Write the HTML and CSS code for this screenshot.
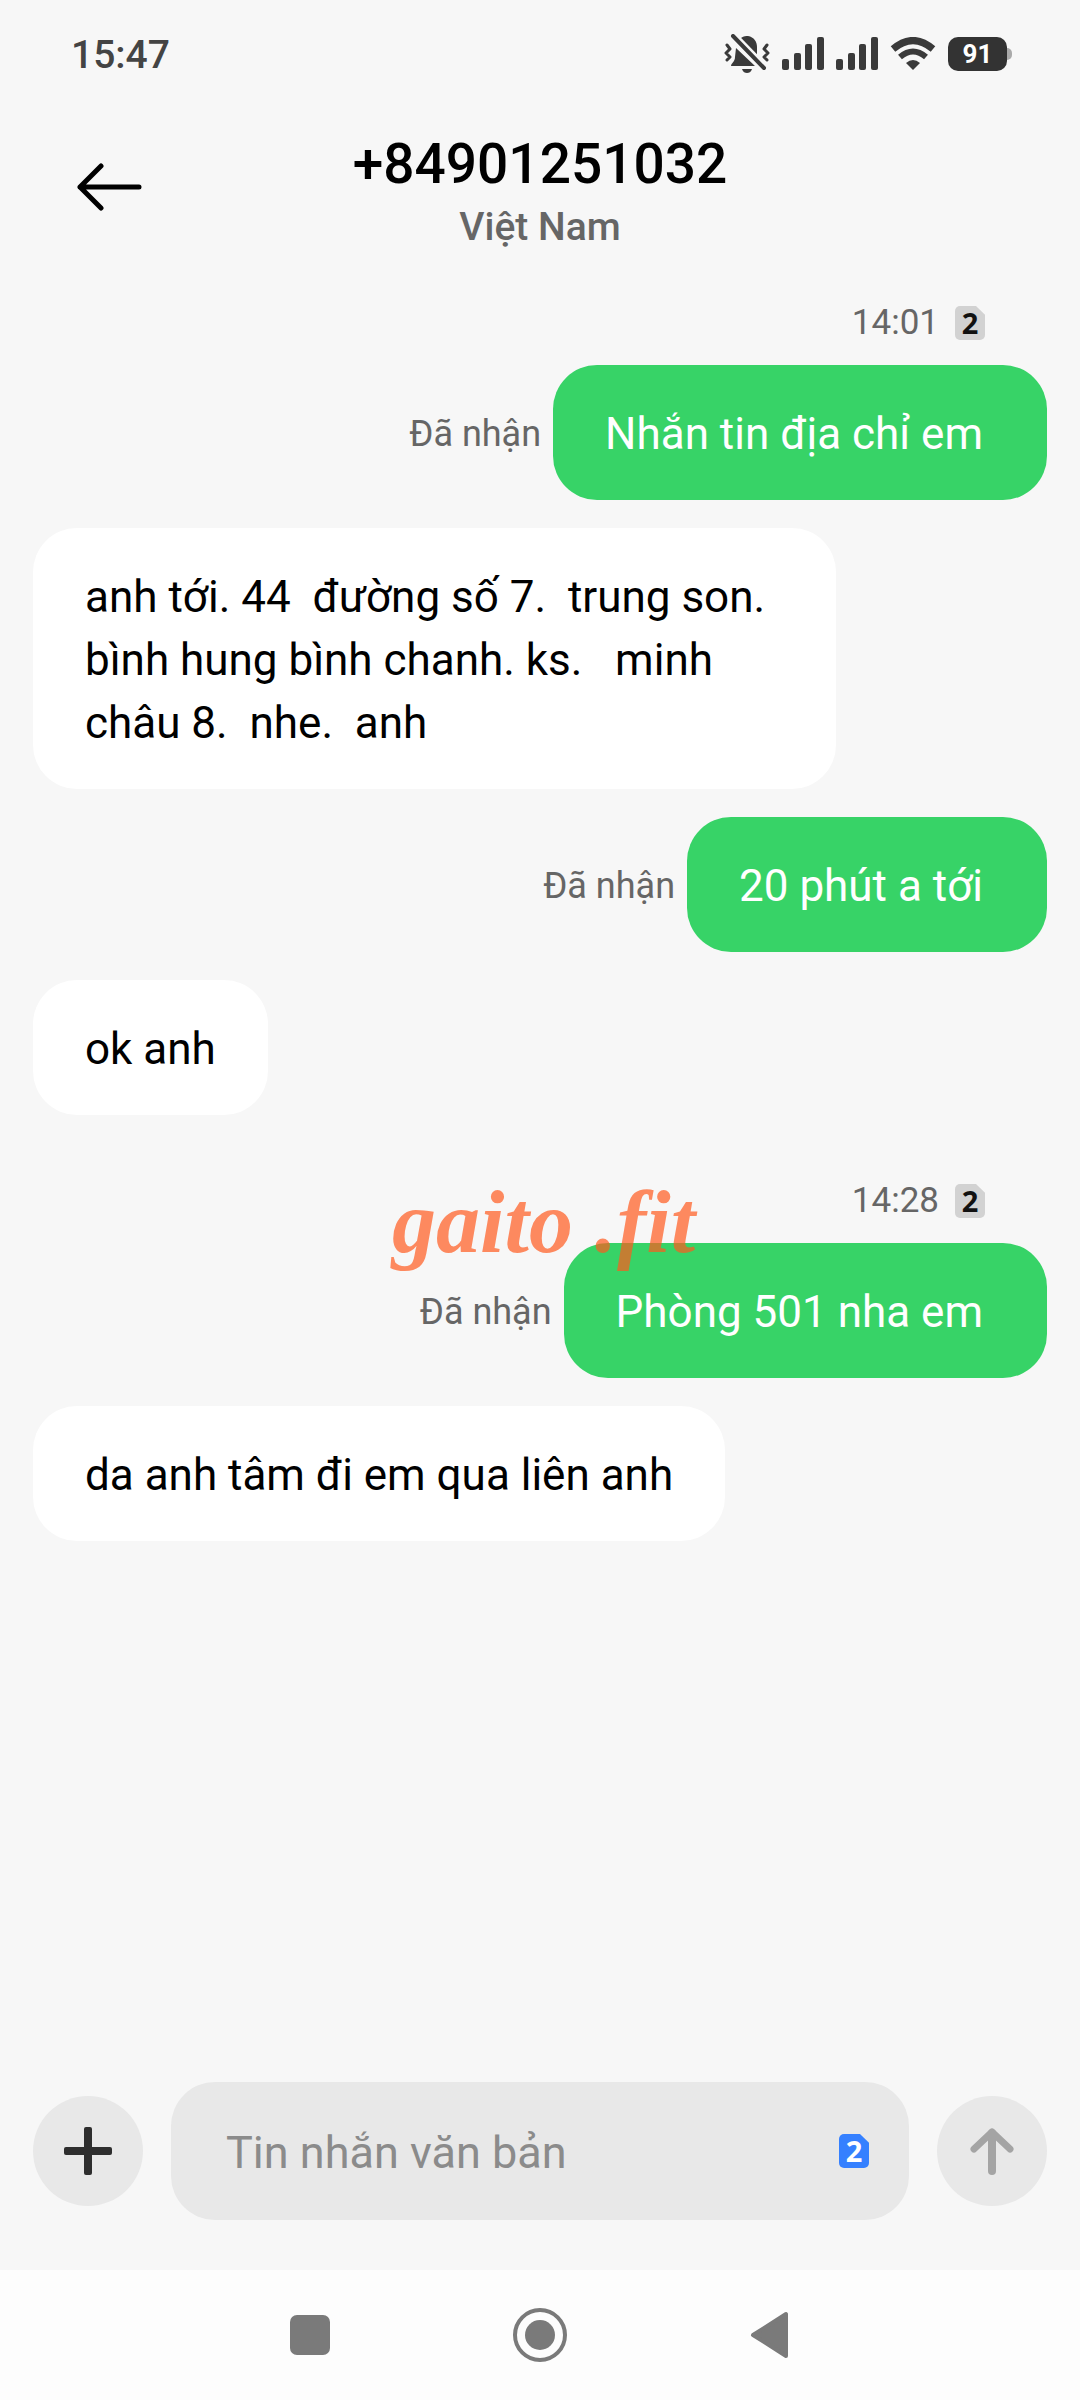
FILE: index.html
```html
<!DOCTYPE html>
<html lang="vi">
<head>
<meta charset="utf-8">
<meta name="viewport" content="width=device-width, initial-scale=1">
<title>+84901251032</title>
<link rel="stylesheet" href="styles.css">
</head>
<body>
<div class="status-bar">
  <time class="clock">15:47</time>
  <div class="status-icons">
    <svg class="icon-bell" width="46" height="40" viewBox="0 0 46 40" aria-hidden="true">
      <g fill="#3a3a3a">
        <path d="M17 4C20 2 22 2 24 2c6 1 9 6 9 11v8L15 5z"/>
        <path d="M12 14L31 32H7c0-3 4-4 4-9z"/>
        <path d="M18 35h10c-1 3-3 4-5 4s-4-1-5-4z"/>
      </g>
      <path d="M9 2L40 34" fill="none" stroke="#f7f7f7" stroke-width="9"/>
      <path d="M9 2L40 34" fill="none" stroke="#3a3a3a" stroke-width="4" stroke-linecap="round"/>
      <path d="M3 11l3 4-4 4 4 4-3 3M43 11l-3 4 4 4-4 4 3 3" fill="none" stroke="#3a3a3a" stroke-width="3" stroke-linecap="round" stroke-linejoin="round"/>
    </svg>
    <svg class="icon-signal" width="42" height="34" viewBox="0 0 42 34" fill="#3a3a3a" aria-hidden="true">
      <rect x="0" y="22" width="7" height="11" rx="2"/><rect x="12" y="16" width="7" height="17" rx="2"/><rect x="23" y="7" width="7" height="26" rx="2"/><rect x="35" y="0" width="7" height="33" rx="2"/>
    </svg>
    <svg class="icon-signal" width="42" height="34" viewBox="0 0 42 34" fill="#3a3a3a" aria-hidden="true">
      <rect x="0" y="22" width="7" height="11" rx="2"/><rect x="12" y="16" width="7" height="17" rx="2"/><rect x="23" y="7" width="7" height="26" rx="2"/><rect x="35" y="0" width="7" height="33" rx="2"/>
    </svg>
    <svg class="icon-wifi" width="46" height="34" viewBox="0 0 46 34" aria-hidden="true">
      <path d="M3 12Q23-5 43 12" fill="none" stroke="#3a3a3a" stroke-width="7"/>
      <path d="M10 20Q23 9 36 20" fill="none" stroke="#3a3a3a" stroke-width="6"/>
      <path d="M16 26Q23 20 30 26L23 33z" fill="#3a3a3a"/>
    </svg>
    <div class="battery"><span class="battery-level">91</span></div>
  </div>
</div>

<header class="header">
  <button class="back" type="button" aria-label="Quay lại">
    <svg width="66" height="48" viewBox="0 0 66 48" fill="none" stroke="#000" stroke-width="5" stroke-linecap="round" stroke-linejoin="round" aria-hidden="true"><path d="M62 24H3M24 3L3 24L24 45"/></svg>
  </button>
  <div class="contact">
    <h1 class="number">+84901251032</h1>
    <p class="country">Việt Nam</p>
  </div>
</header>

<main class="thread">
  <div class="stamp"><time>14:01</time><span class="sim">2</span></div>
  <div class="row row-out"><span class="receipt">Đã nhận</span><p class="bubble bubble-out">Nhắn tin địa chỉ em</p></div>
  <div class="row"><p class="bubble">anh tới. 44  đường số 7.  trung son. bình hung bình chanh. ks.   minh châu 8.  nhe.  anh</p></div>
  <div class="row row-out"><span class="receipt">Đã nhận</span><p class="bubble bubble-out">20 phút a tới</p></div>
  <div class="row"><p class="bubble">ok anh</p></div>
  <div class="stamp stamp-later"><time>14:28</time><span class="sim">2</span><span class="watermark">gaito .fit</span></div>
  <div class="row row-out"><span class="receipt">Đã nhận</span><p class="bubble bubble-out">Phòng 501 nha em</p></div>
  <div class="row"><p class="bubble">da anh tâm đi em qua liên anh</p></div>
</main>

<form class="composer">
  <button class="round" type="button" aria-label="Thêm">
    <svg width="48" height="48" viewBox="0 0 48 48" fill="#2e2e2e" aria-hidden="true"><rect x="0" y="20" width="48" height="8" rx="2"/><rect x="20" y="0" width="8" height="48" rx="2"/></svg>
  </button>
  <div class="field">
    <input class="field-input" type="text" placeholder="Tin nhắn văn bản" aria-label="Tin nhắn văn bản">
    <button class="sim sim-active" type="button" aria-label="SIM 2">2</button>
  </div>
  <button class="round" type="button" aria-label="Gửi">
    <svg width="44" height="48" viewBox="0 0 44 48" fill="none" stroke="#a4a4a4" aria-hidden="true"><path d="M22 6V44" stroke-width="8" stroke-linecap="round"/><path d="M4 22L22 5L40 22" stroke-width="7" stroke-linecap="round" stroke-linejoin="round"/></svg>
  </button>
</form>

<nav class="nav">
  <button class="nav-button" type="button" aria-label="Gần đây"><svg width="56" height="56" viewBox="0 0 56 56" aria-hidden="true"><rect x="8" y="8" width="40" height="40" rx="7" fill="#7a7a7a"/></svg></button>
  <button class="nav-button" type="button" aria-label="Màn hình chính"><svg width="56" height="56" viewBox="0 0 56 56" aria-hidden="true"><circle cx="28" cy="28" r="25" fill="none" stroke="#7a7a7a" stroke-width="4"/><circle cx="28" cy="28" r="15" fill="#7a7a7a"/></svg></button>
  <button class="nav-button" type="button" aria-label="Trở lại"><svg width="56" height="56" viewBox="0 0 56 56" aria-hidden="true"><path d="M11 28L44 7V49z" fill="#7a7a7a" stroke="#7a7a7a" stroke-width="4" stroke-linejoin="round"/></svg></button>
</nav>
</body>
</html>
```
FILE: styles.css
```css
* {
  box-sizing: border-box;
}

body {
  display: flex;
  flex-direction: column;
  min-height: 100vh;
  margin: 0;
  background: #f7f7f7;
  color: #000;
  font-family: Roboto, "Noto Sans", sans-serif;
}

h1,
p {
  margin: 0;
}

button {
  padding: 0;
  border: 0;
  background: none;
  font-family: inherit;
  cursor: pointer;
}

svg {
  display: block;
}

/* Status bar */
.status-bar {
  display: flex;
  align-items: center;
  justify-content: space-between;
  height: 108px;
  padding: 0 68px 0 71px;
}

.clock {
  padding-top: 2px;
  color: #444;
  font-size: 39px;
  font-weight: 500;
  line-height: 48px;
}

.status-icons {
  display: flex;
  align-items: center;
  gap: 12px;
}

.battery {
  position: relative;
  width: 59px;
  height: 34px;
  margin-right: 5px;
  border-radius: 10px;
  background: #333;
  color: #fff;
  font-size: 26px;
  font-weight: 700;
  line-height: 34px;
  text-align: center;
}

.battery::after {
  content: "";
  position: absolute;
  top: 11px;
  left: 100%;
  width: 5px;
  height: 12px;
  border-radius: 0 5px 5px 0;
  background: #aaa;
}

/* Header */
.header {
  display: grid;
  grid-template-columns: 1fr auto 1fr;
  align-items: start;
  padding: 24px 77px 0;
}

.back {
  justify-self: start;
  margin-top: 31px;
}

.contact {
  text-align: center;
}

.number {
  font-size: 55px;
  font-weight: 500;
  line-height: 64px;
}

.country {
  padding-top: 7px;
  color: #666;
  font-size: 39px;
  font-weight: 500;
  line-height: 48px;
}

/* Messages */
.thread {
  flex: 1;
  display: flex;
  flex-direction: column;
  gap: 28px;
  padding: 48px 33px;
}

.stamp {
  position: relative;
  display: flex;
  align-items: center;
  justify-content: flex-end;
  gap: 16px;
  margin-bottom: -10px;
  padding-right: 62px;
  color: #666;
  font-size: 35px;
  line-height: 48px;
}

.stamp-later {
  margin-top: 34px;
}

.sim {
  width: 30px;
  height: 34px;
  border-radius: 5px;
  background: #d2d2d2;
  clip-path: polygon(0 0, 70% 0, 100% 26%, 100% 100%, 0 100%);
  color: #111;
  font-family: "Noto Sans", sans-serif;
  font-size: 29px;
  font-weight: 700;
  line-height: 34px;
  text-align: center;
}

.sim-active {
  background: #3580ff;
  color: #fff;
}

.row {
  display: flex;
  align-items: center;
  gap: 12px;
}

.row-out {
  justify-content: flex-end;
}

.receipt {
  padding-top: 2px;
  color: #666;
  font-size: 36px;
  line-height: 48px;
}

.bubble {
  max-width: 803px;
  padding: 38px 52px 34px;
  border-radius: 44px;
  background: #fff;
  font-size: 44px;
  line-height: 63px;
  white-space: pre-wrap;
}

.bubble-out {
  padding-right: 64px;
  background: #37d367;
  color: #fff;
}

.watermark {
  position: absolute;
  top: -2px;
  left: 359px;
  z-index: 1;
  color: rgba(255, 90, 30, 0.7);
  font-family: "Liberation Serif", serif;
  font-size: 88px;
  font-style: italic;
  font-weight: 700;
  line-height: 96px;
  white-space: nowrap;
}

/* Composer */
.composer {
  display: flex;
  align-items: center;
  gap: 28px;
  padding: 0 33px 50px;
}

.round {
  display: grid;
  flex: none;
  place-items: center;
  width: 110px;
  height: 110px;
  border-radius: 50%;
  background: #e8e8e8;
}

.field {
  display: flex;
  flex: 1;
  align-items: center;
  min-width: 0;
  height: 138px;
  padding: 0 40px 0 55px;
  border-radius: 44px;
  background: #e8e8e8;
}

.field-input {
  flex: 1;
  min-width: 0;
  height: 66px;
  padding: 2px 0 0;
  border: 0;
  outline: 0;
  background: none;
  color: #000;
  font-family: inherit;
  font-size: 45px;
}

.field-input::placeholder {
  color: #8b8b8b;
  opacity: 1;
}

/* System navigation */
.nav {
  display: flex;
  align-items: center;
  justify-content: center;
  gap: 174px;
  height: 130px;
  background: #fdfdfd;
}
```
